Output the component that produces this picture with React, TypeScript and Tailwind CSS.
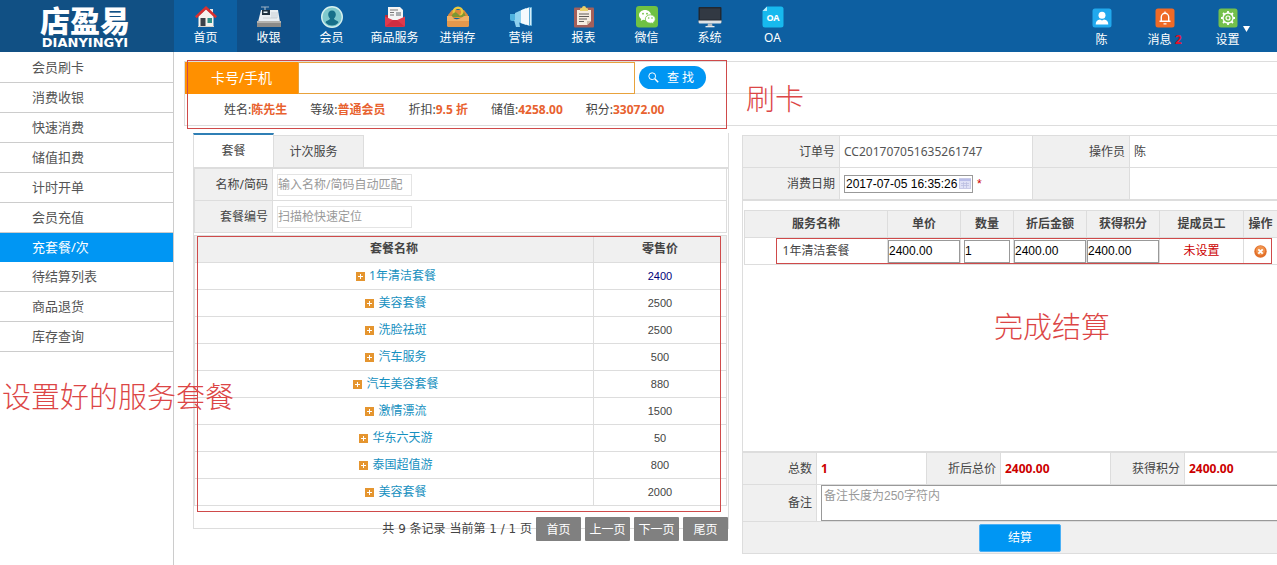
import { ReactNode } from "react";
import clsx from "clsx";

const sideItems = [
  "会员刷卡",
  "消费收银",
  "快速消费",
  "储值扣费",
  "计时开单",
  "会员充值",
  "充套餐/次",
  "待结算列表",
  "商品退货",
  "库存查询",
];

const navItems: { label: string; icon: ReactNode }[] = [
  { label: "首页", icon: <HomeIcon /> },
  { label: "收银", icon: <RegisterIcon /> },
  { label: "会员", icon: <MemberIcon /> },
  { label: "商品服务", icon: <EnvelopeIcon /> },
  { label: "进销存", icon: <StockIcon /> },
  { label: "营销", icon: <MegaphoneIcon /> },
  { label: "报表", icon: <ClipboardIcon /> },
  { label: "微信", icon: <WechatIcon /> },
  { label: "系统", icon: <MonitorIcon /> },
  { label: "OA", icon: <OaIcon /> },
];

const memberInfo = [
  ["姓名", "陈先生"],
  ["等级", "普通会员"],
  ["折扣", "9.5 折"],
  ["储值", "4258.00"],
  ["积分", "33072.00"],
];

const packages = [
  { name: "1年清洁套餐", price: 2400 },
  { name: "美容套餐", price: 2500 },
  { name: "洗脸祛斑", price: 2500 },
  { name: "汽车服务", price: 500 },
  { name: "汽车美容套餐", price: 880 },
  { name: "激情漂流", price: 1500 },
  { name: "华东六天游", price: 50 },
  { name: "泰国超值游", price: 800 },
  { name: "美容套餐", price: 2000 },
];

export default function App() {
  return (
    <div className="relative flex min-h-screen flex-col overflow-hidden bg-white font-['Noto_Sans','Noto_Sans_CJK_SC',sans-serif] text-xs text-[#444]">
      <Header />
      <div className="flex flex-1">
        <Sidebar />
        <main className="min-w-0 flex-1 pt-[9px]">
          <SearchBar />
          <div className="mt-[7px] grid grid-cols-[536fr_535fr] items-start gap-[13px] pl-[19px]">
            <PackagePanel />
            <OrderPanel />
          </div>
        </main>
      </div>
      <Note className="left-[2px] top-[379px]">设置好的服务套餐</Note>
    </div>
  );
}

function Note({ className, children }: { className: string; children: ReactNode }) {
  return (
    <p
      className={clsx(
        "pointer-events-none absolute z-10 whitespace-nowrap font-['Noto_Sans_CJK_SC',sans-serif] text-[29px] leading-8 font-light text-[#dc4646]",
        className
      )}
    >
      {children}
    </p>
  );
}

function Header() {
  return (
    <header className="flex h-[52px] bg-[#0d5fa1] text-white">
      <a
        href="#"
        className="flex w-[174px] flex-col items-center bg-[#115084] pr-1 pt-[3px]"
      >
        <span className="font-['Noto_Sans_CJK_SC',sans-serif] text-[30px] leading-8 font-black">
          店盈易
        </span>
        <span className="mt-[2px] font-['DejaVu_Sans',sans-serif] text-[13px] leading-3 font-bold">
          DIANYINGYI
        </span>
      </a>
      <nav className="flex">
        {navItems.map((item) => (
          <a
            key={item.label}
            href="#"
            className={clsx(
              "flex w-[63px] flex-col items-center pt-[6px]",
              item.label === "收银" && "bg-[#0f4f88]"
            )}
          >
            {item.icon}
            <span className="leading-5 whitespace-nowrap">{item.label}</span>
          </a>
        ))}
      </nav>
      <div className="ml-auto flex pr-[18px]">
        <a href="#" className="flex w-[63px] flex-col items-center pt-2">
          <UserIcon />
          <span className="mt-[2px] leading-5">陈</span>
        </a>
        <a href="#" className="flex w-[63px] flex-col items-center pt-2">
          <BellIcon />
          <span className="mt-[2px] leading-5">
            消息 <b className="text-[#e0102c]">2</b>
          </span>
        </a>
        <a href="#" className="relative flex w-[63px] flex-col items-center pt-2">
          <GearIcon />
          <span className="mt-[2px] leading-5">设置</span>
          <svg className="absolute right-[9px] top-[26px] h-[6px] w-[7px]" viewBox="0 0 7 6" fill="#fff">
            <path d="M0 0h7L3.5 6z" />
          </svg>
        </a>
      </div>
    </header>
  );
}

function Sidebar() {
  return (
    <aside className="w-[174px] border-r border-[#ccc] pt-px text-[13px] text-[#555]">
      {sideItems.map((item) => (
        <a
          key={item}
          href="#"
          className={clsx(
            "block pl-8",
            item === "充套餐/次"
              ? "h-[29px] bg-[#0096f3] leading-[29px] text-white"
              : "h-[30px] border-b border-[#ccc] leading-[29px]"
          )}
        >
          {item}
        </a>
      ))}
    </aside>
  );
}

function SearchBar() {
  return (
    <section className="relative ml-[10px] border-y border-l border-[#ddd]">
      <div className="flex h-8 items-center border-b border-[#ddd]">
        <label
          htmlFor="card"
          className="-mb-px h-8 w-[113px] bg-[#ff9000] text-center text-sm leading-8 text-white"
        >
          卡号/手机
        </label>
        <input
          id="card"
          className="-mb-px h-8 w-[337px] border border-[#e8a23c] px-2 outline-none"
        />
        <button className="ml-1 flex h-[23px] w-[67px] items-center rounded-full bg-[#0096f3] pl-[9px] text-white">
          <svg className="mr-2 h-[11px] w-[11px]" viewBox="0 0 11 11" fill="none" stroke="#fff">
            <circle cx="4.2" cy="4.2" r="3.4" />
            <path d="M6.8 6.8 10.2 10.2" strokeWidth="1.5" />
          </svg>
          查 找
        </button>
      </div>
      <div className="flex h-[31px] items-center gap-[23px] pl-[39px]">
        {memberInfo.map(([label, value]) => (
          <span key={label}>
            {label}:<b className="text-[#e8622f]">{value}</b>
          </span>
        ))}
      </div>
      <div className="pointer-events-none absolute -top-[2px] left-[2px] h-[69px] w-[540px] border border-[#cf4a4a]" />
      <Note className="left-[561px] top-[19px]">刷卡</Note>
    </section>
  );
}

function PackagePanel() {
  return (
    <section>
      <div className="border-x border-b border-[#ddd] pb-[22px]">
        <div className="flex h-[34px] items-end">
          <button className="-ml-px h-[34px] w-[81px] border-x border-t-2 border-x-[#ddd] border-t-[#2f7fb5] bg-white">
            套餐
          </button>
          <button className="h-8 w-[90px] border-t border-r border-[#ddd] bg-[#f0f0f0] pr-[10px]">
            计次服务
          </button>
        </div>
        <div className="border-t-2 border-[#ddd]">
          <FilterRow id="name" label="名称/简码" placeholder="输入名称/简码自动匹配" />
          <FilterRow id="code" label="套餐编号" placeholder="扫描枪快速定位" />
        </div>
        <div className="relative mt-[2px] pr-px">
          <table className="w-full table-fixed border-collapse border border-[#ddd]">
            <thead>
              <tr className="h-[27px] bg-[#f0f0f0]">
                <th className="w-3/4 border border-[#ddd] p-0">套餐名称</th>
                <th className="border border-[#ddd] p-0">零售价</th>
              </tr>
            </thead>
            <tbody>
              {packages.map((p, i) => (
                <tr key={i} className="h-[27px]">
                  <td className="border border-[#ddd] p-0">
                    <a href="#" className="flex items-center justify-center gap-1 pl-1 leading-5 text-[#1690c0]">
                      <PlusIcon />
                      {p.name}
                    </a>
                  </td>
                  <td
                    className={clsx(
                      "border border-[#ddd] p-0 text-center font-['Liberation_Sans',sans-serif] text-[11px]",
                      i === 0 && "text-[#00007a]"
                    )}
                  >
                    {p.price}
                  </td>
                </tr>
              ))}
            </tbody>
          </table>
          <div className="pointer-events-none absolute left-[3px] right-[7px] top-px h-[276px] border border-[#cf4a4a]" />
        </div>
      </div>
      <div className="relative -mt-3 flex items-center justify-end gap-1 pr-px">
        <span className="font-['DejaVu_Sans','Noto_Sans_CJK_SC',sans-serif]">
          共 9 条记录 当前第 1 / 1 页
        </span>
        {["首页", "上一页", "下一页", "尾页"].map((text) => (
          <button key={text} className="h-6 w-[45px] rounded-[1px] bg-[#808080] pt-px text-white">
            {text}
          </button>
        ))}
      </div>
    </section>
  );
}

function FilterRow({ id, label, placeholder }: { id: string; label: string; placeholder: string }) {
  return (
    <div className="mr-px flex h-8 items-center border-x border-b border-[#ddd]">
      <label
        htmlFor={id}
        className="h-[31px] w-[78px] border-r border-[#ddd] bg-[#f0f0f0] pr-1 text-right leading-[31px]"
      >
        {label}
      </label>
      <input
        id={id}
        placeholder={placeholder}
        className="ml-1 h-[22px] w-[135px] border border-[#e4e4e4] outline-none placeholder:text-[#999]"
      />
    </div>
  );
}

const cellInput =
  "block h-[23px] w-full border border-[#999] font-['Liberation_Sans',sans-serif] text-black outline-none";

function OrderPanel() {
  return (
    <section className="relative mt-[2px] min-w-0 overflow-hidden border-y border-l border-[#ddd]">
      <div className="flex border-b border-[#ddd]">
        <LabelCell className="w-[97px]">订单号</LabelCell>
        <ValueCell className="w-[193px] border-r text-[#555]">CC201707051635261747</ValueCell>
        <LabelCell className="w-[97px]">操作员</LabelCell>
        <ValueCell className="flex-1">陈</ValueCell>
      </div>
      <div className="flex border-b-2 border-[#ddd]">
        <LabelCell className="w-[97px]">
          <label htmlFor="date">消费日期</label>
        </LabelCell>
        <ValueCell className="w-[193px] border-r">
          <span className="relative">
            <input
              id="date"
              defaultValue="2017-07-05 16:35:26"
              className="block h-[18px] w-[129px] border border-[#999] pl-px font-['Liberation_Sans',sans-serif] text-black outline-none"
            />
            <CalendarIcon />
          </span>
          <span className="ml-1 font-['Liberation_Sans',sans-serif] text-[#c00]">*</span>
        </ValueCell>
        <LabelCell className="w-[97px]" />
        <ValueCell className="flex-1" />
      </div>

      <div className="relative min-h-[250px] pt-[9px] pl-px">
        <table className="w-full table-fixed border-collapse">
          <thead>
            <tr className="h-[27px] bg-[#f0f0f0]">
              <th className="w-[143px] border border-[#ddd] p-0">服务名称</th>
              <th className="w-[73px] border border-[#ddd] p-0">单价</th>
              <th className="w-[53px] border border-[#ddd] p-0">数量</th>
              <th className="w-[73px] border border-[#ddd] p-0">折后金额</th>
              <th className="w-[73px] border border-[#ddd] p-0">获得积分</th>
              <th className="w-[84px] border border-[#ddd] p-0">提成员工</th>
              <th className="border-y border-l border-[#ddd] p-0">操作</th>
            </tr>
          </thead>
          <tbody>
            <tr className="h-[27px]">
              <td className="border border-[#ddd] p-0 text-center">1年清洁套餐</td>
              <td className="border border-[#ddd] p-0">
                <input aria-label="单价" defaultValue="2400.00" className={cellInput} />
              </td>
              <td className="border border-[#ddd] px-[3px] py-0">
                <input aria-label="数量" defaultValue="1" className={cellInput} />
              </td>
              <td className="border border-[#ddd] p-0">
                <input aria-label="折后金额" defaultValue="2400.00" className={cellInput} />
              </td>
              <td className="border border-[#ddd] p-0">
                <input aria-label="获得积分" defaultValue="2400.00" className={cellInput} />
              </td>
              <td className="border border-[#ddd] p-0 text-center text-[#c00]">未设置</td>
              <td className="border-y border-l border-[#ddd] p-0">
                <button aria-label="删除" className="mx-auto block">
                  <DeleteIcon />
                </button>
              </td>
            </tr>
          </tbody>
        </table>
        <div className="pointer-events-none absolute left-[33px] right-[5px] top-[37px] h-[26px] border border-[#cf4a4a]" />
        <Note className="left-[251px] top-[108px]">完成结算</Note>
      </div>

      <div className="flex border-t-2 border-b border-[#ddd]">
        <LabelCell className="w-[74px]">总数</LabelCell>
        <ValueCell className="w-[110px] border-r font-bold text-[#c00]">1</ValueCell>
        <LabelCell className="w-[74px]">折后总价</LabelCell>
        <ValueCell className="w-[110px] border-r font-bold text-[#c00]">2400.00</ValueCell>
        <LabelCell className="w-[74px]">获得积分</LabelCell>
        <ValueCell className="flex-1 font-bold text-[#c00]">2400.00</ValueCell>
      </div>
      <div className="flex h-[37px] border-b border-[#ddd]">
        <label
          htmlFor="remark"
          className="w-[74px] border-r border-[#ddd] bg-[#f0f0f0] pr-1 text-right leading-9"
        >
          备注
        </label>
        <textarea
          id="remark"
          placeholder="备注长度为250字符内"
          className="ml-1 h-9 flex-1 resize-none border-y border-l border-[#999] px-[2px] font-['Liberation_Sans','Noto_Sans_CJK_SC',sans-serif] leading-5 outline-none placeholder:text-[#999]"
        />
      </div>
      <div className="flex h-[31px] items-center justify-center bg-[#f0f0f0] pl-5">
        <button className="h-7 w-[82px] rounded-[2px] border border-[#4bb0f5] bg-[#0096f3] text-white">
          结算
        </button>
      </div>
    </section>
  );
}

function LabelCell({ className, children }: { className: string; children?: ReactNode }) {
  return (
    <div
      className={clsx(
        "flex h-[31px] shrink-0 items-center justify-end border-r border-[#ddd] bg-[#f0f0f0] pr-1",
        className
      )}
    >
      {children}
    </div>
  );
}

function ValueCell({ className, children }: { className: string; children?: ReactNode }) {
  return (
    <div className={clsx("flex h-[31px] items-center border-[#ddd] pl-1", className)}>
      {children}
    </div>
  );
}

function PlusIcon() {
  return (
    <svg className="h-[9px] w-[9px]" viewBox="0 0 9 9">
      <rect width="9" height="9" fill="#e5952f" />
      <path d="M4.5 2v5M2 4.5h5" stroke="#fff" />
    </svg>
  );
}

function DeleteIcon() {
  return (
    <svg className="h-[13px] w-[13px]" viewBox="0 0 13 13">
      <circle cx="6.5" cy="6.5" r="6.2" fill="#e2702a" />
      <circle cx="6.5" cy="5.6" r="4.6" fill="#f0924c" />
      <path d="m4.3 4.3 4.4 4.4m0-4.4L4.3 8.7" stroke="#fff" strokeWidth="1.8" />
    </svg>
  );
}

function CalendarIcon() {
  return (
    <svg className="absolute right-[2px] top-[3px] h-3 w-3" viewBox="0 0 12 12">
      <rect x=".5" y=".5" width="11" height="10" fill="#dfe1f6" stroke="#c9cbe8" />
      <path d="M0 1h12v2H0z" fill="#b9bde8" />
      <path d="M2 5.5h8M2 7.5h8M4.5 4v6M7.5 4v6" stroke="#b9bce0" strokeWidth=".7" />
    </svg>
  );
}

function HomeIcon() {
  return (
    <svg className="h-[22px] w-[22px]" viewBox="0 0 22 22">
      <path d="M15 3h3v6h-3z" fill="#e8e8e8" />
      <path d="M3.5 10 11 3l7.5 7v11h-15z" fill="#f6f3ee" />
      <path d="M.8 11.2 11 1.8l10.200 9.400" fill="none" stroke="#d8302f" strokeWidth="2.6" />
      <path d="M5.500 12h5v9h-5z" fill="#3c4249" />
      <path d="M12.500 12h4.500v5h-4.500z" fill="#2f9087" />
      <path d="M3 20.500h16" stroke="#d9d4cc" />
    </svg>
  );
}

function RegisterIcon() {
  return (
    <svg className="h-[22px] w-6" viewBox="0 0 24 22">
      <path d="M4 1h8M8 1v3" stroke="#9db1c4" strokeWidth="1.2" />
      <path d="M4 4h17l2 12H1z" fill="#e9eef2" />
      <path d="M5 4h8v5H5z" fill="#1f3140" />
      <path d="M6.500 5.500h4v1.500h-4z" fill="#e8f4fa" />
      <path d="M14 7h7M14 9h7M14 11h7M6 12h14" stroke="#c1c9d0" strokeWidth=".8" />
      <path d="M0 15h24v6H0z" fill="#8d8b88" />
      <path d="M0 15h24v2H0z" fill="#b5b3af" />
    </svg>
  );
}

function MemberIcon() {
  return (
    <svg className="h-[22px] w-[22px]" viewBox="0 0 22 22">
      <circle cx="11" cy="11" r="10.3" fill="#7fc9cd" stroke="#d5f0ee" strokeWidth="1.4" />
      <path d="M11 4.500c2.500 0 3.800 1.700 3.800 4 0 1.800-.8 3.200-1.800 4 0 1.800 3.500 1.800 4.500 3.700A8.300 8.300 0 0 1 11 19.500a8.300 8.300 0 0 1-6.500-3.300c1-1.900 4.500-1.900 4.500-3.700-1-.8-1.800-2.200-1.800-4 0-2.300 1.300-4 3.800-4z" fill="#17708a" />
    </svg>
  );
}

function EnvelopeIcon() {
  return (
    <svg className="h-[22px] w-[22px]" viewBox="0 0 22 22">
      <path d="M4 1h12l3 3v12H4z" fill="#f4f4f4" />
      <path d="M1 9h3v8H1z" fill="#b92a39" />
      <path d="M6 4h8M6 6.500h4M6 9h4" stroke="#777" />
      <path d="M12 6h5v4h-5z" fill="#a8acaf" />
      <path d="M1 10.500 11 15l10-4.500v9q0 1.500-1.500 1.500h-17Q1 21 1 19.500z" fill="#e03a4c" />
      <path d="M1.500 20.500 9 14h4l7.500 6.500z" fill="#cf2d40" />
    </svg>
  );
}

function StockIcon() {
  return (
    <svg className="h-[22px] w-6" viewBox="0 0 24 22">
      <path d="M2 9 6 4h12l4 5v3H2z" fill="#d98a3d" />
      <circle cx="12" cy="6" r="4.3" fill="none" stroke="#e9c83f" strokeWidth="2.4" />
      <path d="M6 9q3-5 6-1t6-2l2 5H5z" fill="#7d9632" />
      <path d="M1 10h5q2 4 6 3t6-3h5v9q0 2-2 2H3q-2 0-2-2z" fill="#f0b065" />
      <path d="M1 15h22v4q0 2-2 2H3q-2 0-2-2z" fill="#e3984c" />
    </svg>
  );
}

function MegaphoneIcon() {
  return (
    <svg className="h-[22px] w-6" viewBox="0 0 24 22">
      <path d="M1 8h6v7H3q-2 0-2-2z" fill="#4fb2de" />
      <path d="m5 14 5 1 1 6H7z" fill="#8fd0ee" />
      <path d="m6 7 11-5v17L6 15z" fill="#8ed2f0" />
      <path d="m12 4.300 9-3.300v19l-9-3z" fill="#f4fafd" />
      <path d="M20 1h3v19h-3z" fill="#5aa9d4" />
      <path d="M21 2h1.300v17H21z" fill="#d5edf8" />
    </svg>
  );
}

function ClipboardIcon() {
  return (
    <svg className="h-[22px] w-[22px]" viewBox="0 0 22 22">
      <rect x="1" y="1.5" width="20" height="20" rx="1" fill="#a4605a" />
      <path d="M4 4h14v11l-4 4H4z" fill="#f5ece0" />
      <path d="M18 15h-4v4z" fill="#cdbda9" />
      <path d="M7 3q0-1 2-1 0-2 2-2t2 2q2 0 2 1v2H7z" fill="#e8d06a" />
      <path d="M6 8h10M6 10.500h10M6 13h8M6 15.500h5" stroke="#615d58" />
    </svg>
  );
}

function WechatIcon() {
  return (
    <svg className="h-[22px] w-[22px]" viewBox="0 0 22 22">
      <rect width="22" height="21.5" rx="3" fill="#6fc143" />
      <path d="M9 4c-3.300 0-6 2.200-6 5 0 1.600.9 3 2.200 3.900L4.700 15l2.400-1.200c.6.200 1.200.2 1.900.2 3.300 0 6-2.200 6-5s-2.700-5-6-5z" fill="#fff" />
      <path d="M14.300 8.800c-2.800 0-5 1.900-5 4.200s2.200 4.200 5 4.200c.6 0 1.100-.1 1.600-.2l2 1-.5-1.700c1.200-.8 1.900-2 1.900-3.300 0-2.300-2.200-4.200-5-4.200z" fill="#fff" stroke="#6fc143" strokeWidth=".8" />
      <g fill="#6fc143">
        <circle cx="7" cy="7.7" r=".9" />
        <circle cx="11" cy="7.7" r=".9" />
        <circle cx="12.7" cy="12" r=".8" />
        <circle cx="16" cy="12" r=".8" />
      </g>
    </svg>
  );
}

function MonitorIcon() {
  return (
    <svg className="h-[22px] w-6" viewBox="0 0 24 22">
      <rect x=".5" y="1" width="23" height="16" rx="1" fill="#222830" />
      <path d="M2 2.500h20v11H2z" fill="#323943" />
      <path d="M.5 14.500h23V16q0 1.500-1.500 1.500H2Q.5 17.500.5 16z" fill="#dfe3e6" />
      <path d="M10 17.500h4l.5 2.500h-5z" fill="#b6bcc1" />
      <path d="M7.500 20h9v1.300h-9z" fill="#e6e9eb" />
    </svg>
  );
}

function OaIcon() {
  return (
    <svg className="h-[22px] w-[22px]" viewBox="0 0 22 22">
      <path d="M5 .5h14q2.500 0 2.500 2.500v16q0 2.500-2.500 2.500H3Q.5 21.500.5 19V5z" fill="#17b9ee" />
      <path d="M5 .5V5H.5z" fill="#b8ecfb" />
      <text x="11" y="14.5" textAnchor="middle" fontSize="9" fontWeight="700" fill="#fff">
        OA
      </text>
    </svg>
  );
}

function UserIcon() {
  return (
    <svg className="h-5 w-5" viewBox="0 0 20 20">
      <rect x=".5" y=".5" width="19" height="19" rx="2.5" fill="#21a9ee" />
      <circle cx="10" cy="7.2" r="3.5" fill="#fff" />
      <path d="M3.700 16.500q0-4.500 4.300-5l2 1 2-1q4.300.5 4.300 5z" fill="#fff" />
    </svg>
  );
}

function BellIcon() {
  return (
    <svg className="h-5 w-5" viewBox="0 0 20 20">
      <rect x=".5" y=".5" width="19" height="19" rx="2.5" fill="#ef6a26" />
      <path d="M6.300 12.800V9a3.700 3.700 0 0 1 7.400 0v3.800M4.500 13.300h11" fill="none" stroke="#fff" strokeWidth="1.4" />
      <path d="M10 3.500v2M8.500 15.800h3" stroke="#fff" strokeWidth="1.3" />
    </svg>
  );
}

function GearIcon() {
  return (
    <svg className="h-5 w-5" viewBox="0 0 20 20" fill="none" stroke="#fff">
      <rect x=".5" y=".5" width="19" height="19" rx="2.5" fill="#74c04c" stroke="none" />
      <circle cx="10" cy="10" r="5" strokeWidth="1.3" />
      <circle cx="10" cy="10" r="2" strokeWidth="1.2" />
      <path
        d="M10 3v2M10 15v2M3 10h2M15 10h2M5 5l1.500 1.500M13.500 13.500 15 15M15 5l-1.500 1.500M6.500 13.500 5 15"
        strokeWidth="1.8"
      />
    </svg>
  );
}
